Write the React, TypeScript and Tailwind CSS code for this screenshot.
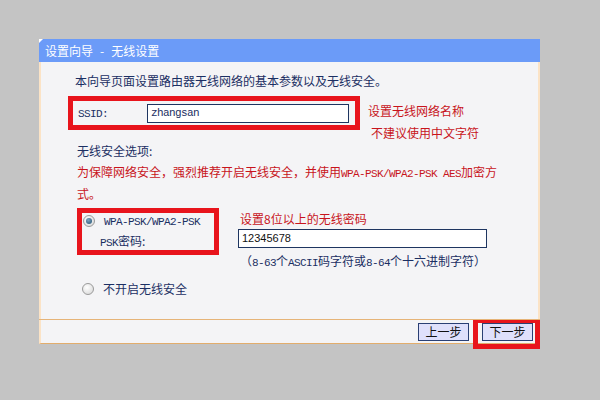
import React from "react";

// latin runs in the old router pages are half-width (6px), so render them in a mono face
function L({ children }: { children: React.ReactNode }) {
  return (
    <span className="font-['Liberation_Mono','Noto_Sans_CJK_SC',monospace] text-[11px] tracking-[-0.6px]">
      {children}
    </span>
  );
}

function Radio({ checked }: { checked?: boolean }) {
  return (
    <span className="flex h-[12px] w-[12px] shrink-0 items-center justify-center rounded-full border border-[#9a9a9a] bg-[radial-gradient(circle_at_40%_35%,#ffffff,#d4d4d4)]">
      {checked && (
        <span className="h-[6px] w-[6px] rounded-full bg-[radial-gradient(circle_at_40%_35%,#7fa4c0,#1d4f70)]" />
      )}
    </span>
  );
}

function StepButton({ label }: { label: string }) {
  return (
    <button className="relative z-10 flex h-[18px] w-[51px] items-center justify-center border border-[#2a3f73] bg-[#dfe0fb] text-[12px] leading-none text-[#111]">
      {label}
    </button>
  );
}

export default function App() {
  return (
    <div className="h-[400px] w-[600px] bg-[#c4c4c4] pl-[39px] pt-[39px] font-['Noto_Sans_CJK_SC',sans-serif] text-[12px] leading-[16px] text-[#1b2f63]">
      <div className="flex w-[501px] flex-col">
        {/* title bar */}
        <div className="relative flex h-[23px] items-center bg-[#6b9bf8] pl-[6px] text-[12px] text-white">
          <svg className="absolute left-0 top-0" width="4" height="4" viewBox="0 0 4 4">
            <path d="M0 0H4L0 4Z" fill="#ffffff" />
          </svg>
          设置向导<span className="mx-[7px]">-</span>无线设置
        </div>

        {/* body */}
        <div className="flex h-[257px] flex-col border-x-2 border-[#fbe3c6] bg-[#f4f4f6]">
          <div className="ml-[34px] mt-[11px]">
            本向导页面设置路由器无线网络的基本参数以及无线安全。
          </div>

          {/* ssid */}
          <div className="ml-[27px] mt-[7px] flex h-[34px] items-start">
            <div className="flex h-[34px] w-[292px] shrink-0 items-center border-[5px] border-[#e8141c] pl-[5px]">
              <span className="w-[69px]">
                <L>SSID:</L>
              </span>
              <div className="flex h-[19px] w-[202px] items-center border border-[#1e3560] bg-white pl-[3px] leading-none">
                <L>zhangsan</L>
              </div>
            </div>
            <div className="ml-[8px] flex flex-col pt-[4px] leading-[22px] text-[#c8141c]">
              <span>设置无线网络名称</span>
              <span className="pl-[3px]">不建议使用中文字符</span>
            </div>
          </div>

          <div className="ml-[36px] mt-[13px]">无线安全选项:</div>
          <div className="ml-[36px] mt-[3px] leading-[20px] text-[#c8141c]">
            为保障网络安全，强烈推荐开启无线安全，并使用<L>WPA-PSK/WPA2-PSK AES</L>加密方
            <br />
            式。
          </div>

          {/* wpa */}
          <div className="ml-[36px] mt-[4px] flex items-start">
            <div className="flex h-[47px] w-[142px] shrink-0 flex-col border-[5px] border-[#e8141c]">
              <div className="mt-[1px] flex h-[14px] items-center">
                <span className="ml-px">
                  <Radio checked />
                </span>
                <span className="ml-[9px]">
                  <L>WPA-PSK/WPA2-PSK</L>
                </span>
              </div>
              <div className="mt-[5px] pl-[18px]">
                <L>PSK</L>密码:
              </div>
            </div>
            <div className="ml-[19px] mt-[3px] flex flex-col">
              <span className="ml-[2px] text-[#c8141c]">设置8位以上的无线密码</span>
              <div className="mt-[2px] flex h-[19px] w-[249px] items-center border border-[#1e3560] bg-white pl-[3px] font-['Liberation_Sans',sans-serif] text-[11px] leading-none text-[#111]">
                12345678
              </div>
              <span className="ml-[2px] mt-[5px]">
                （<L>8-63</L>个<L>ASCII</L>码字符或<L>8-64</L>个十六进制字符）
              </span>
            </div>
          </div>

          <div className="ml-[41px] mt-[10px] flex items-center">
            <Radio />
            <span className="ml-[9px]">不开启无线安全</span>
          </div>
        </div>

        {/* footer */}
        <div className="h-px bg-[#e6b478]" />
        <div className="flex h-[24px] items-start justify-end gap-[13px] border-x-2 border-b border-x-[#fbe3c6] border-b-[#e2ad6c] bg-[#f4f4f6] pr-[5px] pt-[3px]">
          <StepButton label="上一步" />
          <div className="relative">
            <div className="absolute -bottom-[8px] -left-[9px] -right-[7px] -top-[3px] border-[5px] border-t-[3px] border-[#e8141c]" />
            <StepButton label="下一步" />
          </div>
        </div>
      </div>
    </div>
  );
}
